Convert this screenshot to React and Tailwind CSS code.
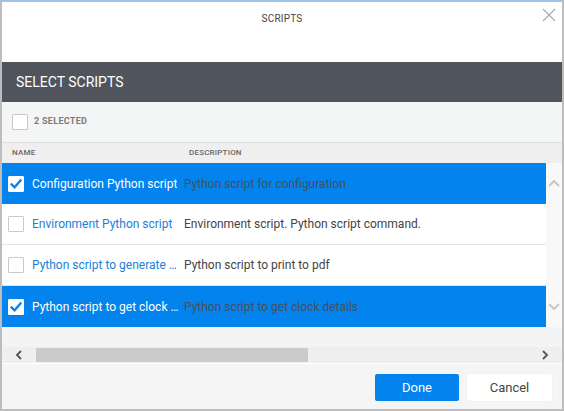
import { useState } from 'react';

const rows = [
  { name: 'Configuration Python script', desc: 'Python script for configuration', checked: true },
  { name: 'Environment Python script', desc: 'Environment script. Python script command.', checked: false },
  { name: 'Python script to generate pdf report', desc: 'Python script to print to pdf', checked: false },
  { name: 'Python script to get clock details', desc: 'Python script to get clock details', checked: true },
];

function Checkbox({ checked, onClick }) {
  return (
    <span
      onClick={onClick}
      className={`w-[16px] h-[16px] shrink-0 flex items-center justify-center bg-white border rounded-[1px] cursor-pointer ${
        checked ? 'border-white' : 'border-[#c9c9c9]'
      }`}
    >
      {checked && (
        <svg width="12" height="12" viewBox="0 0 12 12">
          <path d="M1.6 6.4 L4.6 9.3 L10.6 2.4" fill="none" stroke="#0a7fe6" strokeWidth="2.2" strokeLinecap="square" />
        </svg>
      )}
    </span>
  );
}

function Chevron({ dir }) {
  const d = {
    up: 'M1 7 L6 2 L11 7',
    down: 'M1 2 L6 7 L11 2',
  }[dir];
  return (
    <svg width="12" height="9" viewBox="0 0 12 9">
      <path d={d} fill="none" stroke="#c4c4c4" strokeWidth="1.8" />
    </svg>
  );
}

// scripts picker dialog
export default function App() {
  const [items, setItems] = useState(rows);
  const selected = items.filter((r) => r.checked).length;

  const toggle = (i) => setItems(items.map((r, j) => (j === i ? { ...r, checked: !r.checked } : r)));

  return (
    <div className="w-[564px] h-[411px] bg-white border-2 border-[#bdbdbd] border-t-[#9fc4e6] flex flex-col font-['Roboto',sans-serif] overflow-hidden">
      {/* title */}
      <div className="h-[60px] shrink-0 relative">
        <p className="text-center text-[10px] text-[#444] pt-[9px] tracking-[0.2px]">SCRIPTS</p>
        <svg className="absolute right-[6px] top-[6px]" width="14" height="14" viewBox="0 0 14 14">
          <path d="M1 1 L13 13 M13 1 L1 13" stroke="#a9a9a9" strokeWidth="1.1" />
        </svg>
      </div>

      <div className="h-[40px] shrink-0 bg-[#50545d] flex items-center pl-[14px]">
        <span className="text-white text-[14px]">SELECT SCRIPTS</span>
      </div>

      <div className="h-[40px] shrink-0 bg-[#f4f5f5] flex items-center pl-[10px] gap-[6px] border-b border-[#dedede] box-content">
        <Checkbox checked={false} />
        <span className="text-[9px] font-bold text-[#7a7a7a] tracking-[0.3px]">{selected} SELECTED</span>
      </div>

      {/* table head */}
      <div className="h-[20px] shrink-0 bg-[#efefef] flex items-center text-[8px] text-[#666] font-medium tracking-[0.2px]">
        <span className="w-[187px] pl-[10px]">NAME</span>
        <span>DESCRIPTION</span>
      </div>

      <div className="flex shrink-0 bg-[#f4f4f4]">
        <div className="w-[544px]">
          {items.map((r, i) => (
            <div
              key={r.name}
              className={`h-[41px] flex items-center text-[12px] ${
                r.checked ? 'bg-[#0283ee]' : 'bg-white border-b border-[#dfe6ec]'
              }`}
            >
              <div className="w-[179px] flex items-center pl-[6px] gap-[8px] shrink-0">
                <Checkbox checked={r.checked} onClick={() => toggle(i)} />
                <span className={`truncate ${r.checked ? 'text-white' : 'text-[#1a80d9]'}`}>{r.name}</span>
              </div>
              <span className={`pl-[3px] truncate ${r.checked ? 'text-[#4a4f57]' : 'text-[#444]'}`}>{r.desc}</span>
            </div>
          ))}
        </div>
        <div className="flex-1 bg-[#f8f8f8] flex flex-col items-center justify-between py-[16px]">
          <Chevron dir="up" />
          <Chevron dir="down" />
        </div>
      </div>

      <div className="h-[20px] shrink-0 bg-[#f4f4f4]" />

      {/* horizontal scroll */}
      <div className="h-[16px] shrink-0 bg-[#efefef] flex items-center border-b border-white box-content">
        <span className="w-[34px] flex justify-center">
          <svg width="8" height="10" viewBox="0 0 8 10">
            <path d="M6 1 L2 5 L6 9" fill="none" stroke="#555" strokeWidth="1.8" />
          </svg>
        </span>
        <div className="w-[272px] h-[14px] bg-[#cbcbcb]" />
        <div className="flex-1" />
        <span className="w-[34px] flex justify-center">
          <svg width="8" height="10" viewBox="0 0 8 10">
            <path d="M2 1 L6 5 L2 9" fill="none" stroke="#555" strokeWidth="1.8" />
          </svg>
        </span>
      </div>

      <div className="flex-1 bg-[#f5f5f5] flex justify-end items-start pt-[10px] pr-[10px] gap-[8px]">
        <button type="button" className="w-[84px] h-[27px] bg-[#0283ee] text-white text-[13px] rounded-[2px]">
          Done
        </button>
        <button type="button" className="w-[85px] h-[27px] bg-white text-[#444] text-[13px] rounded-[2px] shadow-[0_0_1px_rgba(0,0,0,0.15)]">
          Cancel
        </button>
      </div>
    </div>
  );
}
